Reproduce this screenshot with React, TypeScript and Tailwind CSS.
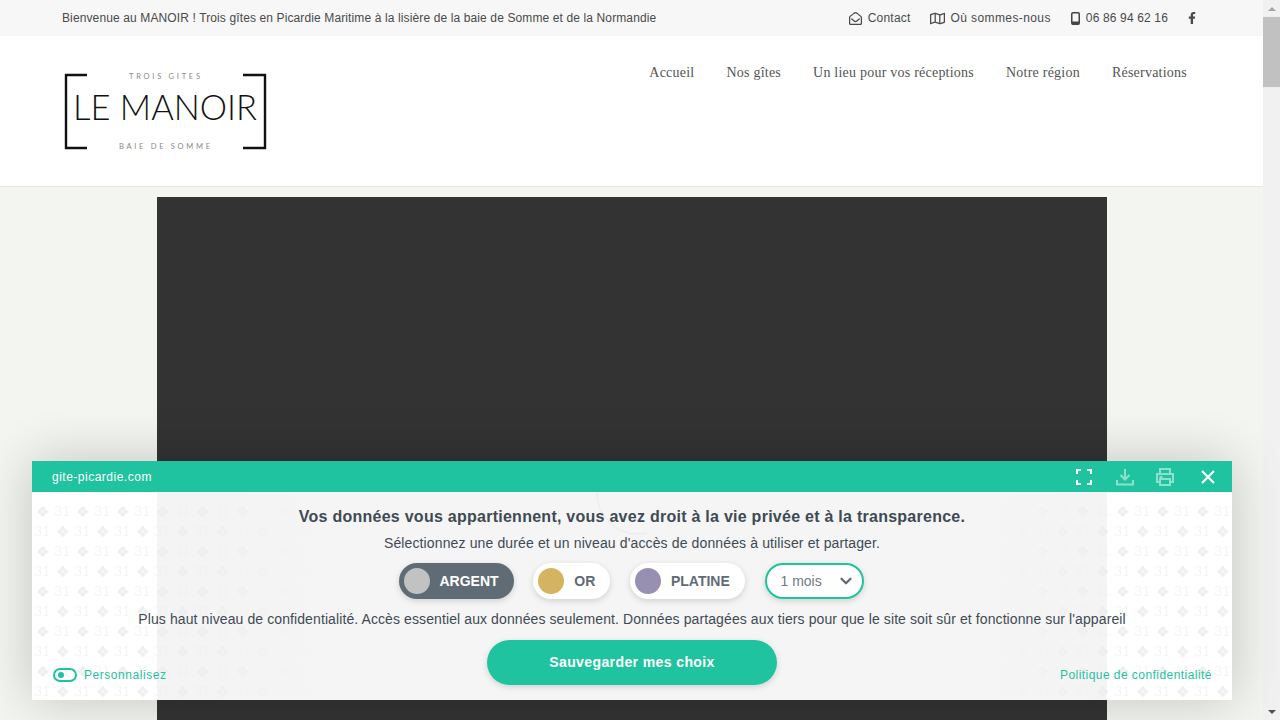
import { FaFacebookF, FaRegEnvelopeOpen, FaRegMap } from "react-icons/fa";
import { ChevronDown } from "lucide-react";

const NAV = ["Accueil", "Nos gîtes", "Un lieu pour vos réceptions", "Notre région", "Réservations"];
const ROWS = Array.from({ length: 10 }, (_, i) => i);
const COLS = Array.from({ length: 60 }, (_, i) => i);

const Logo = () => (
  <svg width="204" height="84" viewBox="0 0 204 84" className="block">
    <path d="M23 4H2V77H23M179 4H201V77H179" fill="none" stroke="#111" strokeWidth="2.4" />
    <text x="65" y="8" textLength="71" fontSize="7.5" fill="#888" className="font-['Lato']">TROIS GITES</text>
    <text x="9" y="49" textLength="184" lengthAdjust="spacingAndGlyphs" fontSize="36" fontWeight="300" fill="#111" className="font-['Lato']">LE MANOIR</text>
    <text x="55" y="78" textLength="91" fontSize="7.5" fill="#888" className="font-['Lato']">BAIE DE SOMME</text>
  </svg>
);

const Phone = () => (
  <svg width="9" height="13" viewBox="0 0 9 13" className="text-[#444]">
    <rect x="0.75" y="0.75" width="7.5" height="11.5" rx="1.2" fill="none" stroke="currentColor" strokeWidth="1.5" />
    <rect x="1" y="9.5" width="7" height="3" fill="currentColor" />
  </svg>
);

const Watermark = () => (
  <div className="absolute inset-0 overflow-hidden pointer-events-none">
    <div className="absolute left-0 top-[9px] font-['Lato'] text-[14px] font-light text-[#f0f0f0]">
      {ROWS.map((r) => (
        <div key={r} className="flex h-5 items-center">
          {COLS.map((c) =>
            (r + c) % 2 === 0 ? (
              <span key={c} className="w-5 text-center shrink-0 leading-5 text-[15px] text-[#eeeeee]">❖</span>
            ) : (
              <span key={c} className="w-5 text-center shrink-0 leading-5">31</span>
            )
          )}
        </div>
      ))}
    </div>
    <div className="absolute inset-y-0 left-[170px] w-[115px] bg-gradient-to-r from-transparent to-[#f5f5f5]" />
    <div className="absolute inset-y-0 left-[285px] right-[245px] bg-[#f5f5f5]" />
    <div className="absolute inset-y-0 right-[130px] w-[115px] bg-gradient-to-l from-transparent to-[#f5f5f5]" />
    <svg width="60" height="44" viewBox="0 0 60 44" fill="none" className="absolute left-[560px] top-0">
      <path d="M5 0A41 41 0 0 0 55 41" stroke="#efefef" strokeWidth="2" />
    </svg>
  </div>
);

const Level = ({ label, dot, active }: { label: string; dot: string; active?: boolean }) => (
  <div
    className={`flex items-center h-9 rounded-full pl-[5px] pr-[15px] gap-[10px] shadow-[0_2px_6px_rgba(0,0,0,0.15)] text-[14px] font-bold ${
      active ? "bg-[#5f6b75] text-white" : "bg-white text-[#5f6b75]"
    }`}
  >
    <span className={`w-[26px] h-[26px] rounded-full ${dot}`} />
    {label}
  </div>
);

const CookiePanel = () => (
  <div className="absolute left-8 top-[461px] w-[1200px] h-[239px] flex flex-col shadow-[0_0_50px_rgba(0,0,0,0.2)] font-['Liberation_Sans',sans-serif] text-[#3f4a54]">
    <div className="h-[31px] bg-[#1fc39f] flex items-center pl-5 pr-4 text-white text-[12px] tracking-[0.5px] z-10">
      <span className="flex-1">gite-picardie.com</span>
      <svg width="16" height="16" viewBox="0 0 16 16" className="mr-6" fill="none" stroke="#fff" strokeWidth="2">
        <path d="M1 5V1H5M11 1H15V5M15 11V15H11M5 15H1V11" />
      </svg>
      <svg width="18" height="18" viewBox="0 0 18 18" className="mr-[22px] opacity-50" fill="none" stroke="#fff" strokeWidth="2">
        <path d="M9 1V11M4.5 7L9 11.5L13.5 7M1 12V16.5H17V12" />
      </svg>
      <svg width="18" height="18" viewBox="0 0 18 18" className="mr-[26px] opacity-50" fill="none" stroke="#fff" strokeWidth="2">
        <path d="M4 6V1H14V6M4 14H1V6H17V14H14M4 11H14V17H4Z" />
        <path d="M3.5 9H6.5" />
      </svg>
      <svg width="16" height="16" viewBox="0 0 16 16" fill="none" stroke="#fff" strokeWidth="2.2">
        <path d="M2 2L14 14M14 2L2 14" />
      </svg>
    </div>
    <div className="relative flex-1 bg-[rgba(255,255,255,0.95)]">
      <Watermark />
      <div className="relative flex flex-col items-center">
        <div className="mt-[15px] text-[16px] leading-[20px] font-bold tracking-[0.26px]">
          Vos données vous appartiennent, vous avez droit à la vie privée et à la transparence.
        </div>
        <div className="mt-[7px] text-[14px] leading-[18px] tracking-[0.13px]">
          Sélectionnez une durée et un niveau d'accès de données à utiliser et partager.
        </div>
        <div className="mt-[11px] mr-[2px] w-[465px] flex items-center justify-between">
          <Level label="ARGENT" dot="bg-[#c2c2c2]" active />
          <Level label="OR" dot="bg-[#d4b461]" />
          <Level label="PLATINE" dot="bg-[#9890b0]" />
          <div className="flex items-center w-[99px] h-9 rounded-full border-2 border-[#1fc39f] bg-white pl-[14px] pr-[3px] text-[14px] text-[#6f7a84] justify-between shadow-[0_2px_6px_rgba(0,0,0,0.15)]">
            1 mois
            <ChevronDown size={18} strokeWidth={3} className="mr-1 text-[#5f6b75]" />
          </div>
        </div>
        <div className="mt-[11px] text-[14px] leading-[18px] tracking-[0.1px]">
          Plus haut niveau de confidentialité. Accès essentiel aux données seulement. Données partagées aux tiers pour que le site soit sûr et fonctionne sur l'appareil
        </div>
        <div className="mt-[12px] w-[290px] h-[45px] rounded-full bg-[#1fc39f] text-white text-[14px] font-bold tracking-[0.4px] flex items-center justify-center shadow-[0_2px_6px_rgba(0,0,0,0.15)]">
          Sauvegarder mes choix
        </div>
      </div>
      <div className="absolute left-[21px] right-5 bottom-[16px] flex items-center text-[12px] text-[#1fc39f]">
        <span className="w-6 h-[14px] rounded-full border-2 border-[#1fc39f] flex items-center pl-[3px] mr-[7px]">
          <span className="w-[6px] h-[6px] rounded-full bg-[#1fc39f]" />
        </span>
        <span className="flex-1 tracking-[0.55px]">Personnalisez</span>
        <span className="tracking-[0.45px]">Politique de confidentialité</span>
      </div>
    </div>
  </div>
);

const Scrollbar = () => (
  <div className="w-[17px] h-full bg-[#f1f1f1] flex flex-col items-center shrink-0">
    <div className="h-[17px] flex items-center justify-center">
      <div className="w-0 h-0 border-x-[4px] border-x-transparent border-b-[4px] border-b-[#a3a3a3]" />
    </div>
    <div className="w-full h-[70px] bg-[#c1c1c1]" />
    <div className="flex-1" />
    <div className="h-[17px] flex items-center justify-center">
      <div className="w-0 h-0 border-x-[4px] border-x-transparent border-t-[4px] border-t-[#505050]" />
    </div>
  </div>
);

export default function App() {
  return (
    <div className="relative flex h-screen w-full overflow-hidden bg-[#f3f5f0]">
      <div className="flex-1 min-w-0 flex flex-col">
        <div className="h-9 bg-[#f7f7f7] flex items-center pl-[62px] pr-[65px] text-[12px] text-[#4a4a4a] font-['Liberation_Sans',sans-serif]">
          <span className="flex-1 tracking-[0.12px]">Bienvenue au MANOIR ! Trois gîtes en Picardie Maritime à la lisière de la baie de Somme et de la Normandie</span>
          <span className="flex items-center gap-[6px] mr-[19px] tracking-[0.2px]"><FaRegEnvelopeOpen size={13} />Contact</span>
          <span className="flex items-center gap-[6px] mr-[20px] tracking-[0.4px]"><FaRegMap size={15} />Où sommes-nous</span>
          <span className="flex items-center gap-[6px] mr-[18px] tracking-[0.15px]"><Phone />06 86 94 62 16</span>
          <FaFacebookF size={12} />
        </div>
        <header className="h-[151px] bg-white border-b border-[#e6e8e3] flex justify-between pl-[64px] pr-[76px]">
          <div className="pt-[35px]"><Logo /></div>
          <nav className="flex gap-8 pt-[28px] h-fit font-['Liberation_Serif',serif] text-[14px] leading-[18px] tracking-[0.23px] text-[#555]">
            {NAV.map((item) => (
              <span key={item}>{item}</span>
            ))}
          </nav>
        </header>
        <main className="flex-1 flex justify-center pt-[10px] min-h-0">
          <div className="w-[950px] h-full bg-[#333333]" />
        </main>
      </div>
      <Scrollbar />
      <CookiePanel />
    </div>
  );
}
